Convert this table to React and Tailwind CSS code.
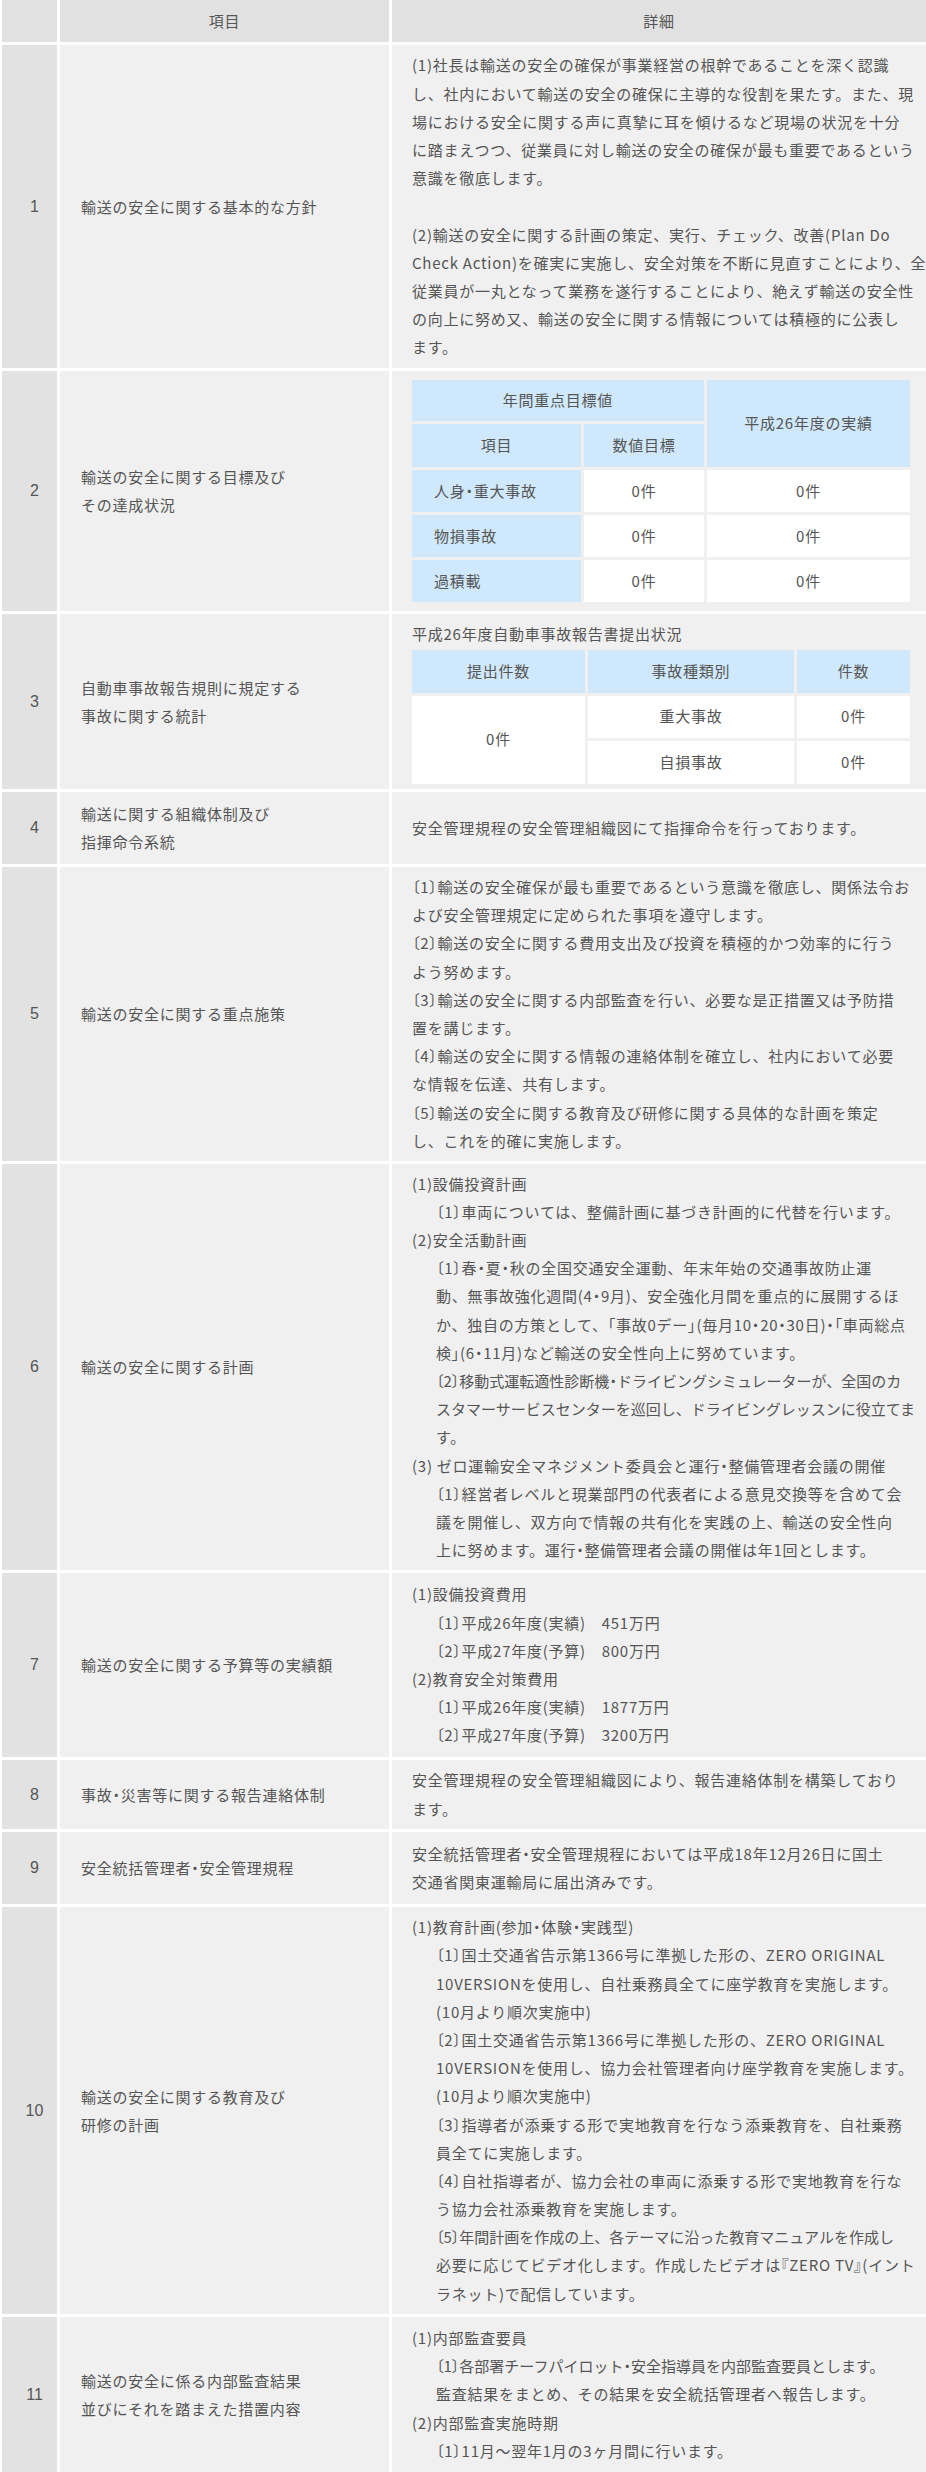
import React from "react";

// detail lines: [text, indent?, tight?]
const rows = [
  {
    no: "1",
    title: ["輸送の安全に関する基本的な方針"],
    lines: [
      ["(1)社長は輸送の安全の確保が事業経営の根幹であることを深く認識"],
      ["し、社内において輸送の安全の確保に主導的な役割を果たす。また、現"],
      ["場における安全に関する声に真摯に耳を傾けるなど現場の状況を十分"],
      ["に踏まえつつ、従業員に対し輸送の安全の確保が最も重要であるという"],
      ["意識を徹底します。"],
      [""],
      ["(2)輸送の安全に関する計画の策定、実行、チェック、改善(Plan Do"],
      ["Check Action)を確実に実施し、安全対策を不断に見直すことにより、全"],
      ["従業員が一丸となって業務を遂行することにより、絶えず輸送の安全性"],
      ["の向上に努め又、輸送の安全に関する情報については積極的に公表し"],
      ["ます。"],
    ],
  },
  { no: "2", title: ["輸送の安全に関する目標及び", "その達成状況"], table: "goals" },
  { no: "3", title: ["自動車事故報告規則に規定する", "事故に関する統計"], table: "stats" },
  {
    no: "4",
    title: ["輸送に関する組織体制及び", "指揮命令系統"],
    lines: [["安全管理規程の安全管理組織図にて指揮命令を行っております。"]],
  },
  {
    no: "5",
    title: ["輸送の安全に関する重点施策"],
    lines: [
      ["〔1〕輸送の安全確保が最も重要であるという意識を徹底し、関係法令お"],
      ["よび安全管理規定に定められた事項を遵守します。"],
      ["〔2〕輸送の安全に関する費用支出及び投資を積極的かつ効率的に行う"],
      ["よう努めます。"],
      ["〔3〕輸送の安全に関する内部監査を行い、必要な是正措置又は予防措"],
      ["置を講じます。"],
      ["〔4〕輸送の安全に関する情報の連絡体制を確立し、社内において必要"],
      ["な情報を伝達、共有します。"],
      ["〔5〕輸送の安全に関する教育及び研修に関する具体的な計画を策定"],
      ["し、これを的確に実施します。"],
    ],
  },
  {
    no: "6",
    title: ["輸送の安全に関する計画"],
    lines: [
      ["(1)設備投資計画"],
      ["〔1〕車両については、整備計画に基づき計画的に代替を行います。", 1],
      ["(2)安全活動計画"],
      ["〔1〕春・夏・秋の全国交通安全運動、年末年始の交通事故防止運", 1],
      ["動、無事故強化週間(4・9月)、安全強化月間を重点的に展開するほ", 1],
      ["か、独自の方策として、「事故0デー」(毎月10・20・30日)・「車両総点", 1],
      ["検」(6・11月)など輸送の安全性向上に努めています。", 1],
      ["〔2〕移動式運転適性診断機・ドライビングシミュレーターが、全国のカ", 1, 1],
      ["スタマーサービスセンターを巡回し、ドライビングレッスンに役立てま", 1, 1],
      ["す。", 1],
      ["(3) ゼロ運輸安全マネジメント委員会と運行・整備管理者会議の開催"],
      ["〔1〕経営者レベルと現業部門の代表者による意見交換等を含めて会", 1],
      ["議を開催し、双方向で情報の共有化を実践の上、輸送の安全性向", 1],
      ["上に努めます。運行・整備管理者会議の開催は年1回とします。", 1],
    ],
  },
  {
    no: "7",
    title: ["輸送の安全に関する予算等の実績額"],
    lines: [
      ["(1)設備投資費用"],
      ["〔1〕平成26年度(実績)　451万円", 1],
      ["〔2〕平成27年度(予算)　800万円", 1],
      ["(2)教育安全対策費用"],
      ["〔1〕平成26年度(実績)　1877万円", 1],
      ["〔2〕平成27年度(予算)　3200万円", 1],
    ],
  },
  {
    no: "8",
    title: ["事故・災害等に関する報告連絡体制"],
    lines: [["安全管理規程の安全管理組織図により、報告連絡体制を構築しており"], ["ます。"]],
  },
  {
    no: "9",
    title: ["安全統括管理者・安全管理規程"],
    lines: [["安全統括管理者・安全管理規程においては平成18年12月26日に国土"], ["交通省関東運輸局に届出済みです。"]],
  },
  {
    no: "10",
    title: ["輸送の安全に関する教育及び", "研修の計画"],
    lines: [
      ["(1)教育計画(参加・体験・実践型)"],
      ["〔1〕国土交通省告示第1366号に準拠した形の、ZERO ORIGINAL", 1],
      ["10VERSIONを使用し、自社乗務員全てに座学教育を実施します。", 1],
      ["(10月より順次実施中)", 1],
      ["〔2〕国土交通省告示第1366号に準拠した形の、ZERO ORIGINAL", 1],
      ["10VERSIONを使用し、協力会社管理者向け座学教育を実施します。", 1],
      ["(10月より順次実施中)", 1],
      ["〔3〕指導者が添乗する形で実地教育を行なう添乗教育を、自社乗務", 1],
      ["員全てに実施します。", 1],
      ["〔4〕自社指導者が、協力会社の車両に添乗する形で実地教育を行な", 1],
      ["う協力会社添乗教育を実施します。", 1],
      ["〔5〕年間計画を作成の上、各テーマに沿った教育マニュアルを作成し", 1, 1],
      ["必要に応じてビデオ化します。作成したビデオは『ZERO TV』(イント", 1],
      ["ラネット)で配信しています。", 1],
    ],
  },
  {
    no: "11",
    title: ["輸送の安全に係る内部監査結果", "並びにそれを踏まえた措置内容"],
    lines: [
      ["(1)内部監査要員"],
      ["〔1〕各部署チーフパイロット・安全指導員を内部監査要員とします。", 1, 1],
      ["監査結果をまとめ、その結果を安全統括管理者へ報告します。", 1],
      ["(2)内部監査実施時期"],
      ["〔1〕11月～翌年1月の3ヶ月間に行います。", 1],
    ],
  },
];

// brackets and middle dots are set narrow in the original, so use proportional glyphs for them
const Txt = ({ children }) =>
  String(children)
    .split(/([〔〕「」『』・])/)
    .map((part, i) =>
      /^[〔〕「」『』・]$/.test(part) ? (
        <span key={i} className="[font-feature-settings:'palt']">
          {part}
        </span>
      ) : (
        part
      )
    );

const Blue = ({ className = "", children }) => (
  <div className={`bg-[#cfe8fb] flex items-center justify-center ${className}`}>
    <Txt>{children}</Txt>
  </div>
);
const White = ({ className = "", children }) => (
  <div className={`bg-white flex items-center justify-center ${className}`}>
    <Txt>{children}</Txt>
  </div>
);

const GoalsTable = () => (
  <div className="grid w-[498px] grid-cols-[169px_120px_203px] grid-rows-[41px_43px_42px_42px_42px] gap-[3px]">
    <Blue className="col-span-2">年間重点目標値</Blue>
    <Blue className="row-span-2">平成26年度の実績</Blue>
    <Blue>項目</Blue>
    <Blue>数値目標</Blue>
    {["人身・重大事故", "物損事故", "過積載"].map((label) => (
      <React.Fragment key={label}>
        <Blue className="!justify-start pl-[22px]">{label}</Blue>
        <White>0件</White>
        <White>0件</White>
      </React.Fragment>
    ))}
  </div>
);

const StatsTable = () => (
  <div className="flex flex-col">
    <div className="leading-[28px] whitespace-nowrap">平成26年度自動車事故報告書提出状況</div>
    <div className="grid w-[498px] grid-cols-[173px_206px_113px] grid-rows-[43px_42px_43px] gap-[3px] mt-[2px]">
      <Blue>提出件数</Blue>
      <Blue>事故種類別</Blue>
      <Blue>件数</Blue>
      <White className="row-span-2">0件</White>
      <White>重大事故</White>
      <White>0件</White>
      <White>自損事故</White>
      <White>0件</White>
    </div>
  </div>
);

export default function App() {
  return (
    <div
      className="bg-white text-[15px] text-[#555] tracking-[0.05em] w-[926px]"
      style={{ fontFamily: '"Noto Sans CJK JP", "Noto Sans", sans-serif' }}
    >
      <div className="grid grid-cols-[55px_329px_534px] grid-rows-[42px_323px_240px_175px_72px_294px_406px_184px_69px_72px_407px_155px] gap-[3px] pl-[2px]">
        <div className="bg-[#e1e1e1]" />
        <div className="bg-[#e1e1e1] flex items-center justify-center">項目</div>
        <div className="bg-[#e1e1e1] flex items-center justify-center">詳細</div>

        {rows.map((r) => (
          <React.Fragment key={r.no}>
            <div
              className="bg-[#e2e2e2] flex items-center justify-center pl-[10px] text-[16px] tracking-normal"
              style={{ fontFamily: '"Liberation Sans", Arial, sans-serif' }}
            >
              {r.no}
            </div>
            <div className="bg-[#f0f0f0] flex flex-col justify-center pl-[21px] leading-[28px]">
              {r.title.map((t) => (
                <div key={t} className="whitespace-nowrap">
                  <Txt>{t}</Txt>
                </div>
              ))}
            </div>
            <div className="bg-[#f0f0f0] flex flex-col justify-center pl-[20px] leading-[28.2px] overflow-hidden">
              {r.table === "goals" && <GoalsTable />}
              {r.table === "stats" && <StatsTable />}
              {r.lines &&
                r.lines.map(([t, ind, tight], i) => (
                  <div
                    key={i}
                    className={`whitespace-nowrap h-[28.2px] ${ind ? "pl-[24px]" : ""} ${tight ? "tracking-normal" : ""}`}
                  >
                    <Txt>{t}</Txt>
                  </div>
                ))}
            </div>
          </React.Fragment>
        ))}
      </div>
    </div>
  );
}
